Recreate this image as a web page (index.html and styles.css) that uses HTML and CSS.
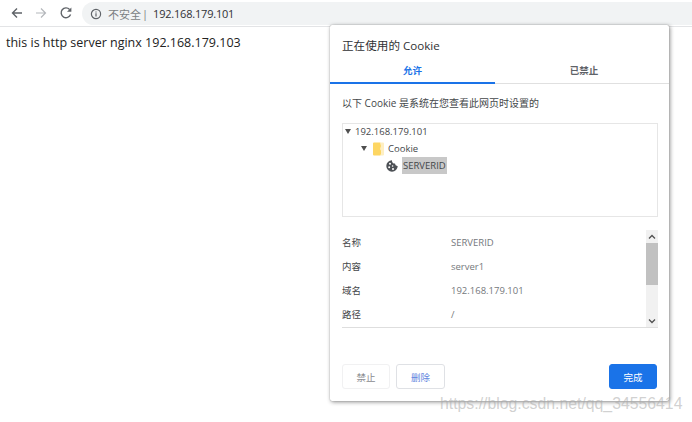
FILE: index.html
```html
<!DOCTYPE html>
<html lang="zh-CN">
<head>
  <meta charset="UTF-8" />
  <title>192.168.179.101</title>
  <link rel="stylesheet" href="styles.css">
</head>
<body>
  <!-- Browser toolbar -->
  <div class="toolbar">
    <div class="nav">
      <svg class="nav-icon" viewBox="0 0 14 14"><path d="M12 7H2.500M7 2.500L2.500 7 7 11.500" fill="none" stroke="#5f6368" stroke-width="1.400"/></svg>
      <svg class="nav-icon" viewBox="0 0 14 14"><path d="M2 7h9.500M7 2.500L11.500 7 7 11.500" fill="none" stroke="#b4b7bb" stroke-width="1.200"/></svg>
      <svg class="nav-icon" viewBox="0 0 14 14"><path d="M11.600 8.600A4.900 4.900 0 1 1 10.600 3.400" fill="none" stroke="#5f6368" stroke-width="1.400"/><path d="M12.400 1.400v4.400H8z" fill="#5f6368"/></svg>
    </div>
    <div class="omnibox">
      <svg class="info-icon" viewBox="0 0 12 12"><circle cx="6" cy="6" r="4.600" fill="none" stroke="#5f6368" stroke-width="1.200"/><path d="M6 5.200v3.200M6 3.400v1" stroke="#5f6368" stroke-width="1.200"/></svg>
      <span class="insecure">不安全</span>
      <span class="sep">|</span>
      <span class="url">192.168.179.101</span>
    </div>
  </div>

  <p class="page-text">this is http server nginx 192.168.179.103</p>

  <!-- Cookie dialog -->
  <div class="dialog">
    <h1 class="dialog-title">正在使用的 Cookie</h1>
    <div class="tabs">
      <div class="tab tab-active">允许</div>
      <div class="tab">已禁止</div>
    </div>
    <p class="intro">以下 Cookie 是系统在您查看此网页时设置的</p>

    <div class="tree">
      <div class="tree-row level-0">
        <span class="arrow"></span>
        <span>192.168.179.101</span>
      </div>
      <div class="tree-row level-1">
        <span class="arrow"></span>
        <svg class="folder" viewBox="0 0 11 14"><path d="M0 1.500Q0 .5 1 .5h6.500L8 4l-.5 3 1 3.500-1 3H1q-1 0-1-1z" fill="#fdd663"/><path d="M7.500.5H10q1 0 1 1v11q0 1-1 1H7.500l1-3-1-3.500.5-3z" fill="#feefc3"/></svg>
        <span>Cookie</span>
      </div>
      <div class="tree-row level-2">
        <svg class="cookie" viewBox="0 0 12 12"><path d="M6 .3a5.700 5.700 0 1 0 5.700 5.700 2.500 2.500 0 0 1-2.700-2.400A2.800 2.800 0 0 1 6 .3z" fill="#4d5156"/><circle cx="4" cy="3.700" r="1" fill="#fff"/><circle cx="3.200" cy="7.200" r="1" fill="#fff"/><circle cx="6.600" cy="6" r=".8" fill="#fff"/><circle cx="7" cy="9" r="1" fill="#fff"/></svg>
        <span class="selected">SERVERID</span>
      </div>
    </div>

    <div class="details">
      <div class="detail-rows">
        <div class="detail-row"><span class="detail-label">名称</span><span class="detail-value">SERVERID</span></div>
        <div class="detail-row"><span class="detail-label">内容</span><span class="detail-value">server1</span></div>
        <div class="detail-row"><span class="detail-label">域名</span><span class="detail-value">192.168.179.101</span></div>
        <div class="detail-row"><span class="detail-label">路径</span><span class="detail-value">/</span></div>
      </div>
      <div class="scrollbar">
        <svg class="scroll-arrow" viewBox="0 0 8 6"><path d="M1 4.500l3-3 3 3" fill="none" stroke="#505050" stroke-width="1.300"/></svg>
        <div class="scroll-track"><div class="scroll-thumb"></div></div>
        <svg class="scroll-arrow" viewBox="0 0 8 6"><path d="M1 1.500l3 3 3-3" fill="none" stroke="#505050" stroke-width="1.300"/></svg>
      </div>
    </div>

    <div class="actions">
      <button class="btn btn-disabled">禁止</button>
      <button class="btn btn-delete">删除</button>
      <button class="btn btn-done">完成</button>
    </div>
  </div>

  <div class="watermark">https://blog.csdn.net/qq_34556414</div>
</body>
</html>
```

FILE: styles.css
```css
html, body {
  height: 100%;
}
body {
  margin: 0;
  background-color: #fff;
  color: #202124;
  font-family: "Open Sans", "Noto Sans CJK SC", sans-serif;
  overflow: hidden;
}
/* Toolbar */
.toolbar {
  display: flex;
  align-items: center;
  height: 26px;
  border-bottom: 1px solid #e3e4e6;
}
.nav {
  display: flex;
  align-items: center;
  gap: 10.500px;
  padding-left: 9.500px;
  width: 72.500px;
}
.nav-icon {
  width: 14px;
  height: 14px;
}
.omnibox {
  flex: 1;
  display: flex;
  align-items: center;
  height: 23px;
  margin-top: 1px;
  padding-left: 8px;
  background-color: #f1f3f4;
  border-radius: 12px 0 0 12px;
  font-size: 11px;
}
.info-icon {
  width: 12px;
  height: 12px;
  margin-right: 6px;
}
.insecure {
  color: #7c7f83;
}
.sep {
  margin: 0 5px 0 1px;
  color: #7c7f83;
}
.url {
  color: #303134;
  letter-spacing: -0.2px;
}
.page-text {
  margin: 7px 0 0 6px;
  font-size: 12.500px;
  line-height: 17px;
  color: #222;
}
/* Dialog */
.dialog {
  position: absolute;
  left: 330px;
  top: 25px;
  width: 339px;
  height: 376px;
  display: flex;
  flex-direction: column;
  background-color: #fff;
  border-radius: 2px;
  box-shadow: 0 0 1px rgba(0, 0, 0, 0.4), 1px 1px 4px rgba(0, 0, 0, 0.45);
}
.dialog-title {
  margin: 12px 0 0 12px;
  font-size: 11.600px;
  font-weight: 400;
  line-height: 17px;
  color: #303134;
}
.tabs {
  display: flex;
  margin-top: 5px;
  height: 25px;
  border-bottom: 1px solid #e0e0e0;
  box-sizing: border-box;
}
.tab {
  flex: 1;
  text-align: center;
  font-size: 9.500px;
  font-weight: 600;
  line-height: 24px;
  color: #5f6368;
}
.tab-active {
  flex: none;
  width: 165px;
  color: #1a73e8;
  height: 25px;
  box-sizing: border-box;
  border-bottom: 2px solid #1a73e8;
}
.tab + .tab {
  padding-left: 4px;
}
.intro {
  margin: 12px 0 0 12px;
  font-size: 10px;
  line-height: 14px;
  color: #44474a;
}
.tree {
  margin: 13px 11px 0 12px;
  height: 94px;
  box-sizing: border-box;
  border: 1px solid #e6e6e6;
  font-size: 9.500px;
  color: #44474a;
}
.tree-row {
  display: flex;
  align-items: center;
  height: 17px;
  padding-left: 2px;
}
.level-0 {
  height: 15px;
  margin-bottom: 1px;
}
.level-1 {
  padding-left: 18px;
}
.level-2 {
  padding-left: 43px;
}
.arrow {
  width: 0;
  height: 0;
  margin-right: 4px;
  border-left: 3px solid transparent;
  border-right: 3px solid transparent;
  border-top: 5px solid #505050;
}
.level-1 .arrow {
  margin-right: 6px;
}
.folder {
  width: 11px;
  height: 14px;
  margin-right: 4px;
}
.cookie {
  width: 12px;
  height: 12px;
  margin-right: 4px;
}
.selected {
  padding: 0 1px;
  line-height: 17px;
  background-color: #c8c8c8;
}
/* Details list */
.details {
  display: flex;
  margin: 13px 11px 0 12px;
  height: 97px;
  border-bottom: 1px solid #dedede;
}
.detail-rows {
  flex: 1;
}
.detail-row {
  display: flex;
  align-items: center;
  height: 24.100px;
  font-size: 9.500px;
}
.detail-label {
  width: 109px;
  color: #44474a;
}
.detail-value {
  color: #75787c;
}
.scrollbar {
  display: flex;
  flex-direction: column;
  width: 12px;
  background-color: #f1f1f1;
}
.scroll-arrow {
  width: 8px;
  height: 6px;
  margin: 4px 2px 3px;
  flex: none;
}
.scroll-track {
  flex: 1;
}
.scroll-thumb {
  height: 42px;
  background-color: #c1c1c1;
}
/* Buttons */
.actions {
  display: flex;
  gap: 6px;
  margin: auto 12px 12px;
}
.btn {
  width: 49px;
  height: 25px;
  padding: 0;
  font-family: inherit;
  font-size: 9.500px;
  background-color: #fff;
  border-radius: 3px;
  border: 1px solid #dfe1e5;
}
.btn-disabled {
  width: 48px;
  color: #8a8c90;
  border-color: #f1f1f2;
}
.btn-delete {
  color: #5f86e0;
}
.btn-done {
  width: 48px;
  margin-left: auto;
  color: #fff;
  background-color: #1a73e8;
  border-color: #1a73e8;
}
/* Blog watermark */
.watermark {
  position: absolute;
  left: 440px;
  top: 394px;
  font-family: "Liberation Sans", sans-serif;
  font-size: 15.800px;
  line-height: 19px;
  color: rgba(170, 170, 170, 0.55);
  white-space: nowrap;
}
```
